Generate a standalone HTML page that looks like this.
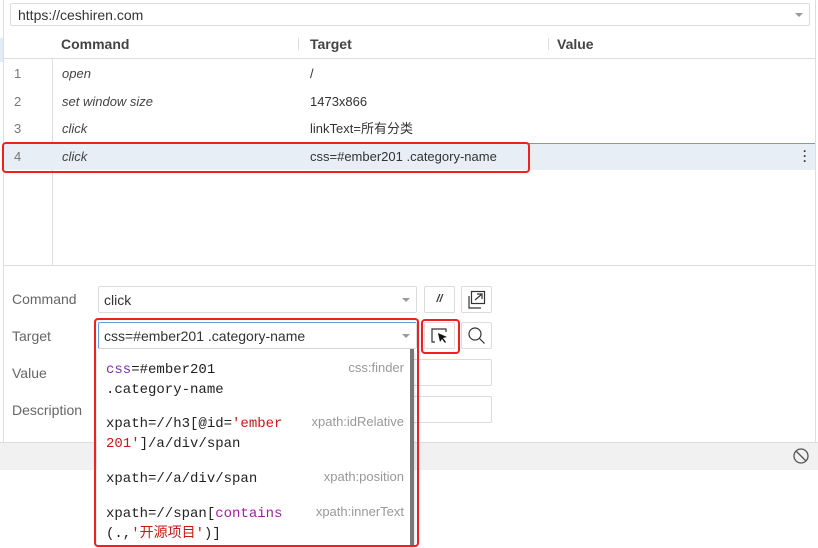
<!DOCTYPE html>
<html><head><meta charset="utf-8"><style>
*{box-sizing:border-box;margin:0;padding:0}
body{width:818px;height:548px;overflow:hidden;background:#fff;font-family:"Liberation Sans","Noto Sans CJK SC",sans-serif;font-size:13px;color:#333;position:relative}
.a{position:absolute;line-height:16px}
.inp{position:absolute;border:1px solid #dcdcdc;border-radius:2px;background:#fff}
.caret{position:absolute;right:6px;top:11px;width:0;height:0;border-left:4px solid transparent;border-right:4px solid transparent;border-top:4px solid #999}
.mono{font-family:"Liberation Mono","Noto Sans CJK SC",monospace;font-size:14px;color:#222;line-height:20px}
.gl{color:#999;font-size:13px;position:absolute;right:6px}
.it{font-style:italic;color:#444}
.lb{font-size:14px;color:#666}
</style></head><body>
<div class="a" style="left:3px;top:0;width:1px;height:442px;background:#ddd"></div>
<div class="a" style="left:815px;top:0;width:1px;height:442px;background:#ddd"></div>
<div class="a" style="left:0;top:38px;width:3px;height:24px;background:#e3ecf6"></div>
<div class="inp" style="left:10px;top:3px;width:800px;height:23px"><span class="a" style="left:7px;top:3px;color:#333;font-size:14px">https://ceshiren.com</span><div class="caret" style="top:9px"></div></div>
<div class="a" style="left:4px;top:58px;width:811px;height:1px;background:#ddd"></div>
<div class="a" style="left:61px;top:36px;font-weight:bold;font-size:14px;color:#444">Command</div>
<div class="a" style="left:298px;top:38px;width:1px;height:12px;background:#ddd"></div>
<div class="a" style="left:310px;top:36px;font-weight:bold;font-size:14px;color:#444">Target</div>
<div class="a" style="left:548px;top:38px;width:1px;height:12px;background:#ddd"></div>
<div class="a" style="left:557px;top:36px;font-weight:bold;font-size:14px;color:#444">Value</div>
<div class="a" style="left:52px;top:59px;width:1px;height:206px;background:#ddd"></div>
<div class="a" style="left:4px;top:143px;width:811px;height:27px;background:#e8eef6;border-top:1px solid #6a9be0"></div>
<div class="a" style="left:14px;top:66px;color:#777">1</div><div class="a it" style="left:62px;top:66px">open</div><div class="a" style="left:310px;top:66px">/</div>
<div class="a" style="left:14px;top:94px;color:#777">2</div><div class="a it" style="left:62px;top:94px">set window size</div><div class="a" style="left:310px;top:94px">1473x866</div>
<div class="a" style="left:14px;top:121px;color:#777">3</div><div class="a it" style="left:62px;top:121px">click</div><div class="a" style="left:310px;top:121px">linkText=所有分类</div>
<div class="a" style="left:14px;top:149px;color:#777">4</div><div class="a it" style="left:62px;top:149px">click</div><div class="a" style="left:310px;top:149px">css=#ember201 .category-name</div>
<div class="a" style="left:803px;top:149px;font-weight:bold;line-height:5px;font-size:12px">·<br>·<br>·</div>
<div class="a" style="left:2px;top:142px;width:528px;height:31px;border:2px solid #f02020;border-radius:4px"></div>
<div class="a" style="left:4px;top:265px;width:811px;height:1px;background:#ddd"></div>
<div class="a lb" style="left:12px;top:291px">Command</div>
<div class="inp" style="left:98px;top:286px;width:319px;height:27px"><span class="a" style="left:5px;top:5px;font-size:14px">click</span><div class="caret"></div></div>
<div class="inp" style="left:424px;top:286px;width:31px;height:27px;text-align:center;line-height:25px;font-style:italic;font-size:11px;font-weight:bold">//</div>
<div class="inp" style="left:461px;top:286px;width:31px;height:27px"><svg width="31" height="27" style="position:absolute;left:-1px;top:-1px"><path d="M8 10v12h12" fill="none" stroke="#333" stroke-width="1.2"/><rect x="10.5" y="5.5" width="13" height="12" fill="none" stroke="#333" stroke-width="1.2"/><path d="M14 14l7-6M16 8h5v5" fill="none" stroke="#333" stroke-width="1.2"/></svg></div>
<div class="a lb" style="left:12px;top:328px">Target</div>
<div class="inp" style="left:98px;top:322px;width:319px;height:27px;border-color:#6a9be0 #dcdcdc #dcdcdc #6a9be0"><span class="a" style="left:5px;top:5px;font-size:14px">css=#ember201 .category-name</span><div class="caret"></div></div>
<div class="inp" style="left:424px;top:322px;width:31px;height:27px"><svg width="31" height="27" style="position:absolute;left:-1px;top:-1px"><path d="M11 20h-3v-13h14v3" fill="none" stroke="#333" stroke-width="1.2"/><path d="M14 11l9 4-4 1 3 4-1 1-3-4-2 3z" fill="#111"/></svg></div>
<div class="inp" style="left:461px;top:322px;width:31px;height:27px"><svg width="31" height="27" style="position:absolute;left:-1px;top:-1px"><circle cx="14" cy="12" r="6" fill="none" stroke="#333" stroke-width="1.2"/><path d="M18.5 16.5l5 5" stroke="#333" stroke-width="1.2"/></svg></div>
<div class="a lb" style="left:12px;top:365px">Value</div>
<div class="inp" style="left:410px;top:359px;width:82px;height:27px"></div>
<div class="a lb" style="left:12px;top:402px">Description</div>
<div class="inp" style="left:410px;top:396px;width:82px;height:27px"></div>
<div class="a" style="left:0;top:442px;width:818px;height:28px;background:#f1f1f1;border-top:1px solid #ddd"></div>
<svg class="a" style="left:792px;top:447px" width="18" height="18"><circle cx="9" cy="9" r="7" fill="none" stroke="#555" stroke-width="1.3"/><path d="M4 4l10 10" stroke="#555" stroke-width="1.3"/></svg>
<div class="a" style="left:97px;top:349px;width:317px;height:196px;background:#fff;border-right:4px solid #777;box-shadow:0 2px 4px rgba(0,0,0,.2)">
<div class="a mono" style="left:9px;top:11px">
<span style="color:#7a2fb0">css</span>=#ember201<br>.category-name</div><div class="gl" style="top:11px">css:finder</div>
<div class="a mono" style="left:9px;top:65px;">xpath=//h3[@id=<span style="color:#c41a16">'ember</span><br><span style="color:#c41a16">201'</span>]/a/div/span</div><div class="gl" style="top:65px">xpath:idRelative</div>
<div class="a mono" style="left:9px;top:120px">xpath=//a/div/span</div><div class="gl" style="top:120px">xpath:position</div>
<div class="a mono" style="left:9px;top:155px">xpath=//span[<span style="color:#a020a0">contains</span><br>(.,<span style="color:#c41a16">'开源项目'</span>)]</div><div class="gl" style="top:155px">xpath:innerText</div>
</div>
<div class="a" style="left:94px;top:318px;width:325px;height:229px;border:2px solid #f02020;border-radius:4px"></div>
<div class="a" style="left:421px;top:319px;width:39px;height:35px;border:2px solid #f02020;border-radius:4px"></div>
</body></html>
